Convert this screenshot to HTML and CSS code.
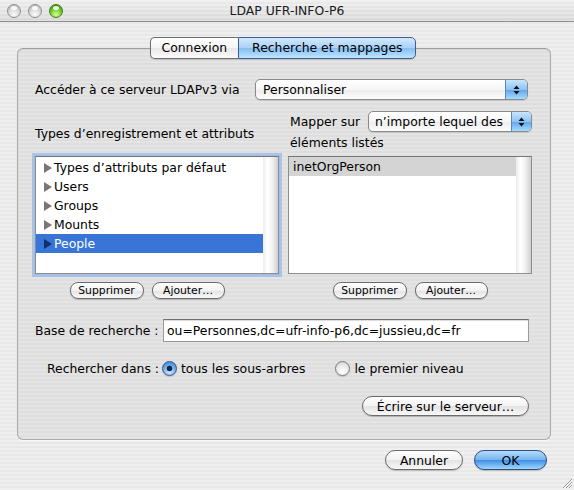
FILE: index.html
```html
<!DOCTYPE html>
<html lang="fr">
<head>
    <meta charset="UTF-8">
    <meta name="viewport" content="width=device-width, initial-scale=1.0">
    <title>LDAP UFR-INFO-P6</title>
    <link rel="stylesheet" href="styles.css">
</head>
<body>
    <div class="window">
        <div class="titlebar">
            <div class="lights">
                <span class="light"></span>
                <span class="light"></span>
                <span class="light green"></span>
            </div>
            <div class="title">LDAP UFR-INFO-P6</div>
        </div>

        <div class="content">
            <div class="tabs">
                <span class="tab first">Connexion</span>
                <span class="tab last active">Recherche et mappages</span>
            </div>

            <div class="panel">
                <div class="access-row">
                    <span>Accéder à ce serveur LDAPv3 via</span>
                    <div class="popup access-popup">
                        <span class="popup-label">Personnaliser</span>
                        <span class="stepper">
                            <svg width="7" height="10" viewBox="0 0 7 10"><path d="M3.5 0.5 L6.5 4 L0.5 4 Z M0.5 6 L6.5 6 L3.5 9.5 Z" fill="#111"/></svg>
                        </span>
                    </div>
                </div>

                <div class="columns">
                    <div class="col">
                        <div class="col-head">Types d’enregistrement et attributs</div>
                        <div class="list focused">
                            <div class="rows">
                                <div class="row"><svg class="tri" width="8" height="10" viewBox="0 0 8 10"><path d="M0 0 L8 5 L0 10 Z"/></svg>Types d’attributs par défaut</div>
                                <div class="row"><svg class="tri" width="8" height="10" viewBox="0 0 8 10"><path d="M0 0 L8 5 L0 10 Z"/></svg>Users</div>
                                <div class="row"><svg class="tri" width="8" height="10" viewBox="0 0 8 10"><path d="M0 0 L8 5 L0 10 Z"/></svg>Groups</div>
                                <div class="row"><svg class="tri" width="8" height="10" viewBox="0 0 8 10"><path d="M0 0 L8 5 L0 10 Z"/></svg>Mounts</div>
                                <div class="row selected"><svg class="tri" width="8" height="10" viewBox="0 0 8 10"><path d="M0 0 L8 5 L0 10 Z"/></svg>People</div>
                            </div>
                            <div class="scroller"></div>
                        </div>
                        <div class="small-buttons left">
                            <span class="btn small w74">Supprimer</span>
                            <span class="btn small w73">Ajouter…</span>
                        </div>
                    </div>

                    <div class="col">
                        <div class="col-head map-head">
                            <div class="map-row">
                                <span>Mapper sur</span>
                                <div class="popup map-popup">
                                    <span class="popup-label">n’importe lequel des</span>
                                    <span class="stepper">
                                        <svg width="7" height="10" viewBox="0 0 7 10"><path d="M3.5 0.5 L6.5 4 L0.5 4 Z M0.5 6 L6.5 6 L3.5 9.5 Z" fill="#111"/></svg>
                                    </span>
                                </div>
                            </div>
                            <div class="map-sub">éléments listés</div>
                        </div>
                        <div class="list">
                            <div class="rows">
                                <div class="row plain inactive">inetOrgPerson</div>
                            </div>
                            <div class="scroller"></div>
                        </div>
                        <div class="small-buttons">
                            <span class="btn small w74">Supprimer</span>
                            <span class="btn small w73">Ajouter…</span>
                        </div>
                    </div>
                </div>

                <div class="base-row">
                    <span class="base-label">Base de recherche :</span>
                    <div class="field">ou=Personnes,dc=ufr-info-p6,dc=jussieu,dc=fr</div>
                </div>

                <div class="radio-row">
                    <span class="radio-label">Rechercher dans :</span>
                    <span class="radio on"></span>
                    <span class="radio-text">tous les sous-arbres</span>
                    <span class="radio"></span>
                    <span class="radio-text">le premier niveau</span>
                </div>

                <div class="write-row">
                    <span class="btn write">Écrire sur le serveur…</span>
                </div>
            </div>

            <div class="footer">
                <span class="btn cancel">Annuler</span>
                <span class="btn ok">OK</span>
            </div>
        </div>

        <svg class="grip" width="10" height="10" viewBox="0 0 10 10">
            <path d="M10 1 L1 10 M10 4 L4 10 M10 7 L7 10" stroke="#9a9a9a" stroke-width="1"/>
            <path d="M10 2 L2 10 M10 5 L5 10 M10 8 L8 10" stroke="#fafafa" stroke-width="1"/>
        </svg>
    </div>
</body>
</html>
```

FILE: styles.css
```css
body {
    margin: 0;
    width: 574px;
    height: 490px;
    overflow: hidden;
    font-family: "DejaVu Sans", "Liberation Sans", sans-serif;
    font-size: 12.4px;
    color: #000;
}
.window {
    position: relative;
    width: 574px;
    height: 490px;
    display: flex;
    flex-direction: column;
    background: repeating-linear-gradient(180deg, #efefef 0 2px, #e8e8e8 2px 4px);
}

/* barre de titre */
.titlebar {
    display: grid;
    align-items: center;
    height: 21px;
    border-bottom: 1px solid #8e8e8e;
    background:
        repeating-linear-gradient(180deg, rgba(255,255,255,0.25) 0 2px, rgba(0,0,0,0) 2px 4px),
        linear-gradient(180deg, #ececec, #d8d8d8);
}
.lights, .title {
    grid-area: 1 / 1;
}
.lights {
    display: flex;
    gap: 7px;
    padding-left: 7px;
    justify-self: start;
}
.light {
    position: relative;
    width: 12px;
    height: 12px;
    border-radius: 50%;
    border: 1px solid #8f8f8f;
    background: radial-gradient(circle at 50% 80%, #fbfbfb 0, #d6d6d6 55%, #a9a9a9 100%);
}
.light::after {
    content: "";
    position: absolute;
    left: 3px;
    top: 1px;
    width: 6px;
    height: 4px;
    border-radius: 50%;
    background: rgba(255,255,255,0.85);
}
.light.green {
    border-color: #3f7a1c;
    background: radial-gradient(circle at 50% 80%, #d4ff8c 0, #6cc629 55%, #2f7a0c 100%);
}
.title {
    justify-self: center;
    color: #1a1a1a;
}

.content {
    flex: 1;
    display: flex;
    flex-direction: column;
    padding: 15px 0 0 17px;
}

/* onglets */
.tabs {
    position: relative;
    z-index: 1;
    display: flex;
    justify-content: center;
    width: 532px;
    margin-bottom: -11px;
}
.tab {
    height: 20px;
    line-height: 20px;
    padding: 0 11px;
    border: 1px solid #6f6f6f;
    background: linear-gradient(180deg, #ffffff 0, #f5f5f5 50%, #e7e7e7 51%, #fbfbfb 100%);
    box-shadow: 0 1px 1px rgba(0,0,0,0.15);
}
.tab.first {
    border-radius: 5px 0 0 5px;
    border-right: none;
}
.tab.last {
    border-radius: 0 5px 5px 0;
}
.tab.active {
    padding: 0 13px;
    border-color: #3d5d8f;
    background: linear-gradient(180deg, #d2e9fd 0, #a9d1f7 50%, #86bdf3 51%, #bde6ff 100%);
}

/* boîte de groupe */
.panel {
    width: 499px;
    padding: 30px 16px 23px 17px;
    border: 1px solid #aaaaaa;
    border-top-color: #9d9d9d;
    border-radius: 6px;
    background: repeating-linear-gradient(180deg, #e4e4e4 0 2px, #dedede 2px 4px);
    box-shadow: 0 1px 0 #f8f8f8, inset 0 1px 2px rgba(0,0,0,0.06);
}

.access-row {
    display: flex;
    align-items: center;
    height: 21px;
}
.popup {
    display: flex;
    align-items: stretch;
    height: 19px;
    border: 1px solid #8a8a8a;
    border-radius: 5px;
    background: linear-gradient(180deg, #ffffff 0, #f6f6f6 50%, #ececec 51%, #fdfdfd 100%);
    box-shadow: 0 1px 1px rgba(0,0,0,0.12);
    overflow: hidden;
}
.popup-label {
    flex: 1;
    padding-left: 7px;
    line-height: 19px;
    white-space: nowrap;
    overflow: hidden;
}
.stepper {
    display: flex;
    align-items: center;
    justify-content: center;
    width: 21px;
    border-left: 1px solid #5a86c4;
    background: linear-gradient(180deg, #c9e5fd 0, #8fc3f4 50%, #5ea4ec 51%, #a6dcff 100%);
}
.access-popup {
    width: 271px;
    margin-left: auto;
    margin-right: 6px;
}

.columns {
    display: grid;
    grid-template-columns: 244px 244px;
    column-gap: 9px;
    margin-top: 11px;
}
.col {
    display: flex;
    flex-direction: column;
}
.col-head {
    height: 45px;
    display: flex;
    align-items: center;
}
.map-head {
    flex-direction: column;
    align-items: stretch;
    padding-left: 2px;
}
.map-row {
    display: flex;
    align-items: center;
    height: 21px;
}
.map-popup {
    width: 162px;
    margin-left: auto;
}
.map-popup .popup-label {
    padding-left: 6px;
}
.map-popup .stepper {
    width: 19px;
}
.map-sub {
    margin-top: 3px;
    line-height: 16px;
}

/* listes */
.list {
    display: flex;
    height: 116px;
    border: 1px solid #8e8e8e;
    border-top-color: #777;
    background: #fff;
}
.list.focused {
    box-shadow: 0 0 0 1px #9cbfea, 0 0 0 3px rgba(125,170,230,0.55);
}
.rows {
    flex: 1;
    padding-top: 1px;
}
.row {
    display: flex;
    align-items: center;
    height: 19px;
    padding-left: 8px;
    white-space: nowrap;
}
.row .tri {
    fill: #777;
    margin-right: 2px;
}
.row.selected {
    background: #3875d7;
    color: #fff;
}
.row.selected .tri {
    fill: #12306a;
}
.row.plain {
    padding-left: 4px;
}
.row.inactive {
    background: #d4d4d4;
}
.list:not(.focused) .rows {
    padding-top: 0;
}
.scroller {
    width: 15px;
    background: linear-gradient(90deg, #ececec 0, #ffffff 30%, #f3f3f3 60%, #cfcfcf 100%);
}

/* boutons Aqua */
.btn {
    display: inline-flex;
    align-items: center;
    justify-content: center;
    border: 1px solid #6c6c6c;
    background: linear-gradient(180deg, #ffffff 0, #f2f2f2 50%, #e3e3e3 51%, #f8f8f8 100%);
    box-shadow: 0 1px 1px rgba(0,0,0,0.2);
    white-space: nowrap;
}
.small-buttons {
    display: flex;
    justify-content: center;
    gap: 8px;
    margin-top: 8px;
}
.small-buttons.left {
    padding-right: 20px;
}
.btn.small {
    height: 15px;
    border-radius: 8px;
    font-size: 10.8px;
}
.w74 { width: 72px; }
.w73 { width: 71px; }

.base-row {
    display: flex;
    align-items: center;
    margin-top: 20px;
}
.base-label {
    white-space: nowrap;
}
.field {
    width: 361px;
    height: 21px;
    line-height: 21px;
    margin-left: auto;
    margin-right: 5px;
    padding-left: 3px;
    border: 1px solid #9a9a9a;
    border-top-color: #6f6f6f;
    background: #fff;
    box-shadow: inset 0 1px 1px rgba(0,0,0,0.15);
    white-space: nowrap;
}

.radio-row {
    display: flex;
    align-items: center;
    height: 16px;
    margin-top: 18px;
    padding-left: 12px;
}
.radio {
    width: 13px;
    height: 13px;
    margin: 0 4px 0 3px;
    border-radius: 50%;
    border: 1px solid #7c7c7c;
    background: radial-gradient(circle at 50% 75%, #ffffff 0, #e9e9e9 55%, #c4c4c4 100%);
    box-shadow: 0 1px 1px rgba(0,0,0,0.15);
}
.radio.on {
    border-color: #35578f;
    background:
        radial-gradient(circle, #17264a 0 2.5px, rgba(0,0,0,0) 3.2px),
        radial-gradient(circle at 50% 75%, #d3ecff 0, #6aaaea 55%, #3072c8 100%);
}
.radio-text + .radio {
    margin-left: 30px;
}

.write-row {
    display: flex;
    justify-content: flex-end;
    margin-top: 20px;
}
.btn.write {
    width: 165px;
    height: 18px;
    margin-right: 5px;
    border-radius: 10px;
}

.footer {
    display: flex;
    justify-content: flex-end;
    gap: 11px;
    padding: 10px 27px 0 0;
}
.btn.cancel, .btn.ok {
    height: 18px;
    border-radius: 10px;
}
.btn.cancel {
    width: 76px;
}
.btn.ok {
    width: 71px;
    border-color: #2c4c84;
    background: linear-gradient(180deg, #b5dcfa 0, #73b3ef 50%, #3f8ee4 51%, #9fd6ff 100%);
}

.grip {
    position: absolute;
    right: 2px;
    bottom: 2px;
}
```
